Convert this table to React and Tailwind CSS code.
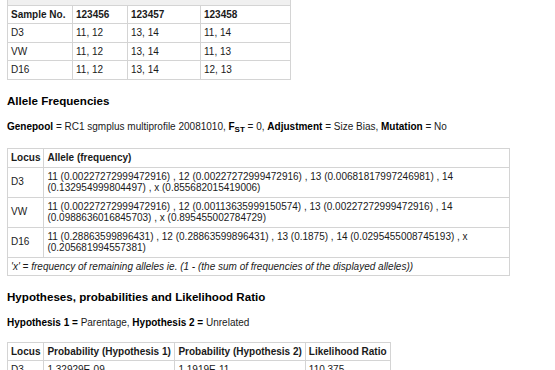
export default function App() {
  const cell = "border border-[#d4d4d4] px-[3px] py-[3px] align-middle";
  const head = "border border-[#d4d4d4] px-[3px] py-[3px] font-bold text-left whitespace-nowrap";
  return (
    <div className="h-[370px] w-[555px] overflow-hidden bg-white text-[10px] leading-[11.5px] text-[#1a1a1a]" style={{ fontFamily: '"Liberation Sans", Arial, sans-serif' }}>
      <div className="-mt-[14px] px-[7px]">
        <table className="border-collapse">
          <tbody>
            <tr>
              <td className={head + " text-[#888] bg-[#f0f0f0]"} colSpan={4}>Name</td>
            </tr>
            <tr>
              <th className={head + " w-[65px]"}>Sample No.</th>
              <th className={head + " w-[55px]"}>123456</th>
              <th className={head + " w-[73px]"}>123457</th>
              <th className={head + " w-[90px]"}>123458</th>
            </tr>
            {[
              ["D3", "11, 12", "13, 14", "11, 14"],
              ["VW", "11, 12", "13, 14", "11, 13"],
              ["D16", "11, 12", "13, 14", "12, 13"],
            ].map((r) => (
              <tr key={r[0]}>
                {r.map((c, i) => (
                  <td key={i} className={cell}>{c}</td>
                ))}
              </tr>
            ))}
          </tbody>
        </table>

        <h2 className="mt-[14px] text-[11.6px] font-bold leading-[13px] text-black">Allele Frequencies</h2>
        <p className="mt-[14px]">
          <b className="text-black">Genepool</b> = RC1 sgmplus multiprofile 20081010, <b className="text-black">F<sub className="text-[8px]">ST</sub></b> = 0, <b className="text-black">Adjustment</b> = Size Bias, <b className="text-black">Mutation</b> = No
        </p>

        <table className="mt-[16px] w-[503px] border-collapse">
          <tbody>
            <tr>
              <th className={head + " w-[36px]"}>Locus</th>
              <th className={head}>Allele (frequency)</th>
            </tr>
            <tr>
              <td className={cell}>D3</td>
              <td className={cell}>11 (0.00227272999472916) , 12 (0.00227272999472916) , 13 (0.00681817997246981) , 14 (0.132954999804497) , x (0.855682015419006)</td>
            </tr>
            <tr>
              <td className={cell}>VW</td>
              <td className={cell}>11 (0.00227272999472916) , 12 (0.00113635999150574) , 13 (0.00227272999472916) , 14 (0.0988636016845703) , x (0.895455002784729)</td>
            </tr>
            <tr>
              <td className={cell}>D16</td>
              <td className={cell}>11 (0.28863599896431) , 12 (0.28863599896431) , 13 (0.1875) , 14 (0.0295455008745193) , x (0.205681994557381)</td>
            </tr>
            <tr>
              <td className={cell + " italic"} colSpan={2}>'x' = frequency of remaining alleles ie. (1 - (the sum of frequencies of the displayed alleles))</td>
            </tr>
          </tbody>
        </table>

        <h2 className="mt-[14px] text-[11.6px] font-bold leading-[13px] text-black">Hypotheses, probabilities and Likelihood Ratio</h2>
        <p className="mt-[14px]">
          <b className="text-black">Hypothesis 1 =</b> Parentage, <b className="text-black">Hypothesis 2 =</b> Unrelated
        </p>

        <table className="mt-[13px] border-collapse">
          <tbody>
            <tr>
              <th className={head + " w-[36px]"}>Locus</th>
              <th className={head + " w-[131px]"}>Probability (Hypothesis 1)</th>
              <th className={head + " w-[130px]"}>Probability (Hypothesis 2)</th>
              <th className={head + " w-[84px]"}>Likelihood Ratio</th>
            </tr>
            <tr>
              <td className={cell}>D3</td>
              <td className={cell}>1.32929E-09</td>
              <td className={cell}>1.1919E-11</td>
              <td className={cell}>110.375</td>
            </tr>
          </tbody>
        </table>
      </div>
    </div>
  );
}
